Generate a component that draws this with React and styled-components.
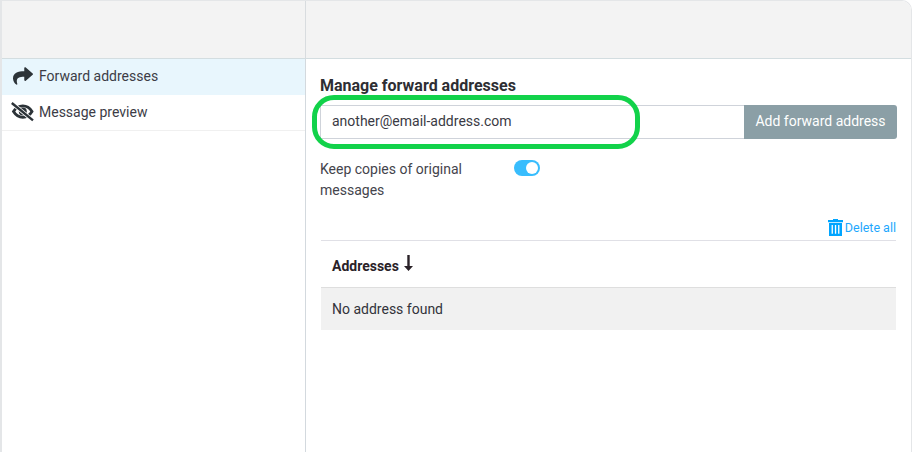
import React from 'react';
import styled, { createGlobalStyle } from 'styled-components';
import { FaShare } from 'react-icons/fa';

const Global = createGlobalStyle`
  html, body { margin: 0; padding: 0; background: #fff; }
  body { font-family: Roboto, "Liberation Sans", sans-serif; font-size: 14px; color: #33333b; overflow: hidden; }
`;

const Card = styled.div`
  box-sizing: border-box;
  width: 912px;
  height: 452px;
  border: 1px solid #e4e6e8;
  border-left: 2px solid #e4e6e8;
  border-bottom: 0;
  border-radius: 0 10px 0 0;
  display: grid;
  grid-template-columns: 304px 1fr;
  grid-template-rows: 58px 1fr;
  overflow: hidden;
  position: relative;
`;
const HeadCell = styled.div`
  background: #f3f3f3;
  border-bottom: 1px solid #d3dde0;
  border-right: ${p => (p.$divider ? '1px solid #d8dcdf' : '0')};
`;
const Side = styled.nav`
  border-right: 1px solid #d3d9de;
  display: flex;
  flex-direction: column;
`;
const NavItem = styled.div`
  height: 36px;
  box-sizing: border-box;
  display: flex;
  align-items: center;
  gap: 5px;
  padding: 0 0 2px 9px;
  background: ${p => (p.$active ? '#e8f6fd' : '#fff')};
  border-bottom: ${p => (p.$active ? '0' : '1px solid #f0f0f0')};
  color: #3c3c46;
`;
const IconSlot = styled.span`
  width: 23px;
  display: flex;
  justify-content: center;
  color: #2c3338;
  font-size: 20px;
`;
const Main = styled.main`
  padding: 17px 14px 0 14px;
  display: flex;
  flex-direction: column;
`;
const Title = styled.h2`
  margin: 0;
  font-size: 16px;
  line-height: 19px;
  font-weight: 700;
  color: #2e2e33;
`;
const InputRow = styled.div`
  display: flex;
  height: 34px;
  margin-top: 10px;
`;
const Field = styled.div`
  flex: 1;
  box-sizing: border-box;
  border: 1px solid #cfd3da;
  border-right: 0;
  padding: 0 0 2px 11px;
  display: flex;
  align-items: center;
  color: #3a3a44;
`;
const AddButton = styled.div`
  width: 153px;
  background: #8b9fa6;
  color: #fff;
  display: flex;
  align-items: center;
  justify-content: center;
  padding-bottom: 2px;
  box-sizing: border-box;
  border-radius: 0 3px 3px 0;
`;
const OptionRow = styled.div`
  display: flex;
  margin-top: 20px;
  line-height: 21px;
  color: #44444c;
`;
const OptionLabel = styled.div`
  width: 194px;
`;
const Toggle = styled.div`
  width: 26px;
  height: 16px;
  border-radius: 8px;
  background: #38bdfd;
  margin-top: 1px;
  display: flex;
  align-items: center;
  justify-content: flex-end;
  padding-right: 2px;
  box-sizing: border-box;
`;
const Knob = styled.div`
  width: 12px;
  height: 12px;
  border-radius: 50%;
  background: #fff;
`;
const DeleteRow = styled.div`
  display: flex;
  justify-content: flex-end;
  align-items: center;
  gap: 2px;
  height: 20px;
  margin-top: 16px;
  padding-right: 1px;
  color: #1ea7fd;
  font-size: 12.5px;
`;
const Table = styled.div`
  margin: 3px 1px 0 1px;
  border-top: 1px solid #e0e0e6;
`;
const TableHead = styled.div`
  height: 47px;
  box-sizing: border-box;
  border-bottom: 1px solid #dedede;
  padding: 4px 0 0 11px;
  display: flex;
  align-items: center;
  font-weight: 700;
  color: #2a2228;
  gap: 5px;
`;
const EmptyRow = styled.div`
  height: 42px;
  background: #f1f1f1;
  padding-left: 11px;
  display: flex;
  align-items: center;
  color: #33333b;
`;
const SortArrow = styled.svg`
  width: 9px;
  height: 16px;
  margin-top: -6px;
`;
const Highlight = styled.div`
  position: absolute;
  left: 310px;
  top: 94px;
  width: 318px;
  height: 44px;
  border: 5px solid #12d24a;
  border-radius: 22px;
  pointer-events: none;
`;

const EyeOff = () => (
  <svg width="23" height="20" viewBox="0 0 23 20" fill="none" stroke="currentColor">
    <path d="M2.5 9.5C5 5.5 8 3.8 11.8 3.8S18.6 5.5 21 9.5C18.6 13.5 15.6 15.3 11.8 15.3S5 13.5 2.5 9.5Z" strokeWidth="2.8" />
    <path d="M7.8 9.5a4 4 0 0 0 8 0 4 4 0 0 0-8 0Z" fill="currentColor" stroke="none" />
    <path d="M0.8 1L22 18.4" stroke="#fff" strokeWidth="4" />
    <path d="M0.8 1L22 18.4" strokeWidth="2.4" />
  </svg>
);

const Trash = () => (
  <svg width="15" height="17" viewBox="0 0 15 17" fill="#00a5ff">
    <path d="M5 0h5v1h5v2.2H0V1h5z" />
    <path d="M1 4h13v13H1zM3.6 6v8.8h1.3V6zM6.9 6v8.8h1.3V6zM10.1 6v8.8h1.3V6z" fillRule="evenodd" />
  </svg>
);

export default function App() {
  return (
    <>
      <Global />
      <Card>
        <HeadCell $divider />
        <HeadCell />
        <Side>
          <NavItem $active>
            <IconSlot><FaShare /></IconSlot>
            Forward addresses
          </NavItem>
          <NavItem>
            <IconSlot><EyeOff /></IconSlot>
            Message preview
          </NavItem>
        </Side>
        <Main>
          <Title>Manage forward addresses</Title>
          <InputRow>
            <Field>another@email-address.com</Field>
            <AddButton>Add forward address</AddButton>
          </InputRow>
          <OptionRow>
            <OptionLabel>Keep copies of original messages</OptionLabel>
            <Toggle><Knob /></Toggle>
          </OptionRow>
          <DeleteRow><Trash />Delete all</DeleteRow>
          <Table>
            <TableHead>
              Addresses
              <SortArrow viewBox="0 0 9 16" fill="#2a2228">
                <path d="M3.3 0h2.4v11H9L4.5 16 0 11h3.3z" />
              </SortArrow>
            </TableHead>
            <EmptyRow>No address found</EmptyRow>
          </Table>
        </Main>
        <Highlight />
      </Card>
    </>
  );
}
